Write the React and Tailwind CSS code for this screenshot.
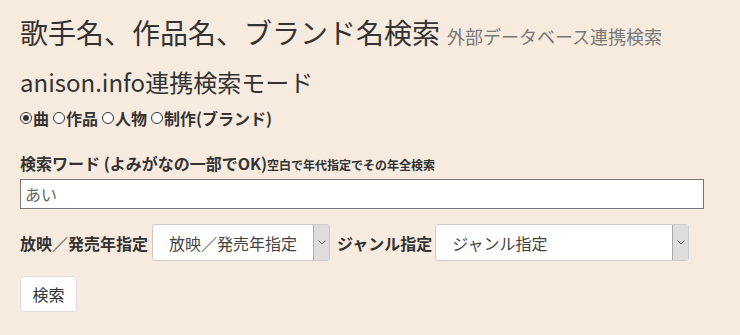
import { useState } from 'react';

const font = { fontFamily: '"Noto Sans CJK JP", "Noto Sans", sans-serif' };

function Radio({ checked, label, onClick }) {
  return (
    <label className="flex items-center cursor-pointer" onClick={onClick}>
      <span className="w-[12px] h-[12px] rounded-full border border-[#333] bg-white flex items-center justify-center mr-[1px]">
        {checked && <span className="w-[6px] h-[6px] rounded-full bg-[#333]" />}
      </span>
      <span>{label}</span>
    </label>
  );
}

function Select({ value, width }) {
  return (
    <div className={`flex h-[37px] bg-white border border-[#ccc] rounded-[3px] ${width}`}>
      <div className="flex-1 flex items-center pl-[16px] text-[16px] font-normal text-[#444]">{value}</div>
      <div className="w-[16px] bg-[#ddd] border-l border-[#aaa] flex items-center justify-center">
        <svg width="8" height="5" viewBox="0 0 8 5" fill="none" stroke="#666" strokeWidth="1">
          <path d="M0.5 0.5 L4 4 L7.5 0.5" />
        </svg>
      </div>
    </div>
  );
}

export default function App() {
  const [mode, setMode] = useState('song');
  const [word, setWord] = useState('あい');

  return (
    <div className="w-[740px] h-[335px] bg-[#f7ebe0] text-[#333] px-[20px] overflow-hidden" style={font}>
      <h1 className="flex items-baseline pt-[12px] leading-[40px]">
        <span className="text-[28px] font-normal">歌手名、作品名、ブランド名検索</span>
        <span className="ml-[7px] text-[18px] text-[#777]">外部データベース連携検索</span>
      </h1>

      <h2 className="mt-[10px] text-[24px] leading-[32px] font-normal">anison.info連携検索モード</h2>

      <div className="mt-[8px] flex gap-[4px] text-[16px] font-bold leading-[24px]">
        <Radio checked={mode === 'song'} label="曲" onClick={() => setMode('song')} />
        <Radio checked={mode === 'work'} label="作品" onClick={() => setMode('work')} />
        <Radio checked={mode === 'person'} label="人物" onClick={() => setMode('person')} />
        <Radio checked={mode === 'brand'} label="制作(ブランド)" onClick={() => setMode('brand')} />
      </div>

      <div className="mt-[22px] flex items-baseline font-bold leading-[22px]">
        <span className="text-[16px]">検索ワード (よみがなの一部でOK)</span>
        <span className="text-[12px]">空白で年代指定でその年全検索</span>
      </div>

      <input
        type="text"
        value={word}
        onChange={(e) => setWord(e.target.value)}
        className="mt-[3px] block w-[684px] h-[30px] bg-white border border-[#777] px-[4px] text-[16px] text-[#666] outline-none"
        style={font}
      />

      <div className="mt-[15px] flex items-center font-bold text-[16px]">
        <span className="mr-[4px]">放映／発売年指定</span>
        <Select value="放映／発売年指定" width="w-[178px]" />
        <span className="ml-[7px] mr-[3px]">ジャンル指定</span>
        <Select value="ジャンル指定" width="w-[254px]" />
      </div>

      <button
        type="button"
        className="mt-[15px] w-[57px] h-[36px] bg-white border border-[#ddd] rounded-[3px] text-[16px] text-[#333]"
        style={font}
      >
        検索
      </button>
    </div>
  );
}
